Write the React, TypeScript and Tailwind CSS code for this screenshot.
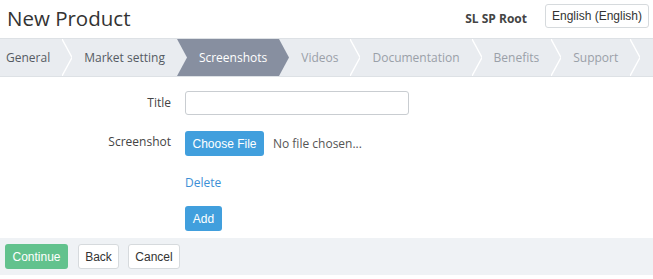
const tabs = [
  "General",
  "Market setting",
  "Screenshots",
  "Videos",
  "Documentation",
  "Benefits",
  "Support",
];
const activeIndex = 2;

function Separator({ kind }: { kind: "plain" | "before" | "after" }) {
  return (
    <svg width="10" height="37" viewBox="0 0 10 37" preserveAspectRatio="none" className="shrink-0 block">
      {kind === "before" ? (
        <>
          <rect x="0" y="0" width="10" height="37" fill="#878fa0" />
          <polygon points="0,0 10,18.5 0,37" fill="#e9ecf0" />
        </>
      ) : kind === "after" ? (
        <polygon points="0,0 10,18.5 0,37" fill="#878fa0" />
      ) : (
        <polyline points="0,0 10,18.5 0,37" fill="none" stroke="#ffffff" strokeWidth="1.4" />
      )}
    </svg>
  );
}

export default function App() {
  return (
    <div className="w-[653px] h-[279px] bg-white font-['Open_Sans',sans-serif] text-[#333]">
      <div className="flex h-[38px] items-center pl-[7px] pr-[4px]">
        <h1 className="text-[20.5px] leading-none text-[#333] mt-[-2px]">New Product</h1>
        <div className="ml-auto flex items-center">
          <span className="text-[12px] font-bold text-[#444]">SL SP Root</span>
          <button
            type="button"
            className="ml-[18px] h-[24px] w-[104px] rounded-[3px] border border-[#d6dadd] bg-white font-['Liberation_Sans',sans-serif] text-[12px] text-[#333] mt-[-6px]"
          >
            English (English)
          </button>
        </div>
      </div>

      <div className="flex h-[39px] items-stretch border-t border-b border-[#dde1e5] bg-[#e9ecf0] text-[12px]">
        {tabs.map((t, i) => {
          const active = i === activeIndex;
          const kind = i + 1 === activeIndex ? "before" : active ? "after" : "plain";
          return (
            <div key={t} className="flex items-stretch">
              <div
                className={
                  "flex items-center whitespace-nowrap pr-[12px] " +
                  (i === 0 ? "pl-[6px] " : "pl-[12px] ") +
                  (active
                    ? "bg-[#878fa0] text-white"
                    : i < activeIndex
                    ? "text-[#555b63]"
                    : "text-[#9aa0a8]")
                }
              >
                {t}
              </div>
              <Separator kind={kind} />
            </div>
          );
        })}
      </div>

      <div className="flex flex-col gap-[16px] pt-[14px] text-[12px]">
        <div className="flex items-center">
          <label className="w-[171px] text-right text-[#444]">Title</label>
          <input
            type="text"
            className="ml-[14px] h-[24px] w-[224px] rounded-[3px] border border-[#c9cdd1] bg-white outline-none"
          />
        </div>
        <div className="flex items-center">
          <label className="w-[171px] text-right text-[#444] mt-[-3px]">Screenshot</label>
          <button
            type="button"
            className="ml-[14px] h-[25px] w-[79px] rounded-[3px] bg-[#419fdd] font-['Liberation_Sans',sans-serif] text-[12px] text-white"
          >
            Choose File
          </button>
          <span className="ml-[9px] text-[#555]">No file chosen...</span>
        </div>
        <div className="pl-[185px] pt-[2px]">
          <a href="#" className="text-[#3d8fd6]">Delete</a>
        </div>
        <div className="pl-[185px] mt-[-2px]">
          <button
            type="button"
            className="h-[25px] w-[37px] rounded-[3px] bg-[#419fdd] font-['Liberation_Sans',sans-serif] text-[12px] text-white"
          >
            Add
          </button>
        </div>
      </div>

      <div className="mt-[7px] flex h-[37px] items-center gap-[9px] bg-[#eff2f5] pl-[5px] font-['Liberation_Sans',sans-serif] text-[12px]">
        <button type="button" className="h-[25px] w-[63px] rounded-[3px] bg-[#62c28d] text-white">
          Continue
        </button>
        <button type="button" className="ml-[1px] h-[25px] w-[41px] rounded-[3px] border border-[#d6dadd] bg-white text-[#333]">
          Back
        </button>
        <button type="button" className="h-[25px] w-[52px] rounded-[3px] border border-[#d6dadd] bg-white text-[#333]">
          Cancel
        </button>
      </div>
    </div>
  );
}
